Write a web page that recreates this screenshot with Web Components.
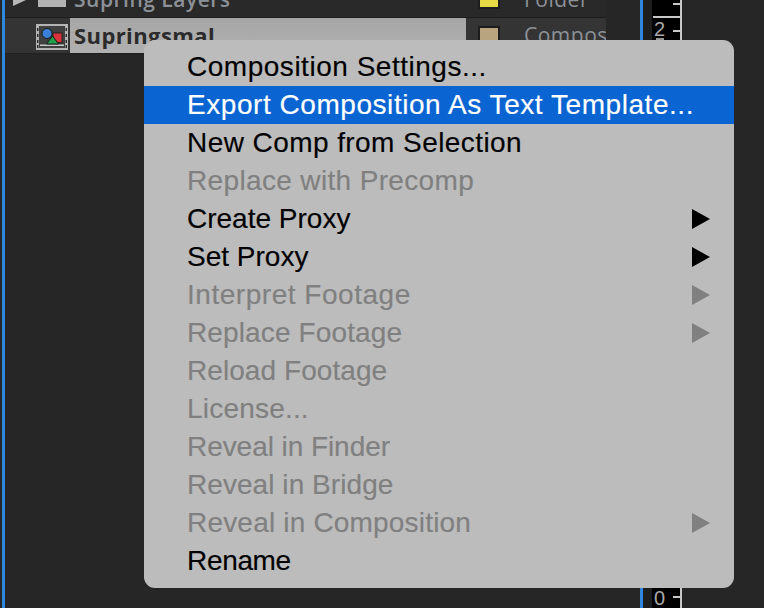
<!DOCTYPE html>
<html><head><meta charset="utf-8"><style>
html,body{margin:0;padding:0;background:#262626;}
body{width:764px;height:608px;overflow:hidden;position:relative;}
</style></head><body>
<ae-stage>
  <ae-panel slot="panel"></ae-panel>
  <ae-ruler slot="ruler"></ae-ruler>
  <ae-menu slot="menu">
    <ae-item style="--ls:.52px">Composition Settings...</ae-item>
    <ae-item active style="--ls:.55px">Export Composition As Text Template...</ae-item>
    <ae-item style="--ls:.43px">New Comp from Selection</ae-item>
    <ae-item disabled style="--ls:.35px">Replace with Precomp</ae-item>
    <ae-item submenu>Create Proxy</ae-item>
    <ae-item submenu>Set Proxy</ae-item>
    <ae-item disabled submenu style="--ls:.53px">Interpret Footage</ae-item>
    <ae-item disabled submenu style="--ls:.13px">Replace Footage</ae-item>
    <ae-item disabled style="--ls:.07px">Reload Footage</ae-item>
    <ae-item disabled style="--ls:.2px">License...</ae-item>
    <ae-item disabled style="--ls:-.06px">Reveal in Finder</ae-item>
    <ae-item disabled style="--ls:.06px">Reveal in Bridge</ae-item>
    <ae-item disabled submenu style="--ls:.19px">Reveal in Composition</ae-item>
    <ae-item style="--ls:-.33px">Rename</ae-item>
  </ae-menu>
</ae-stage>
<script>
function def(name,html){
  customElements.define(name,class extends HTMLElement{
    constructor(){super();this.attachShadow({mode:'open'}).innerHTML=html;}
  });
}
def('ae-stage',`<style>
:host{display:block;position:relative;width:764px;height:608px;overflow:hidden;background:#262626}
.wrap{display:flex;height:608px}
.gutter{width:2px;flex:none}
.line{width:3px;background:#2f86dc;flex:none}
.mid{width:635px;flex:none;display:flex}
.line2{width:3px;background:#2f86dc;flex:none}
.gap{width:9px;flex:none;background:#1e1e1e}
.menu{position:absolute;left:144px;top:40px}
</style>
<div class="wrap">
  <div class="gutter"></div><div class="line"></div>
  <div class="mid"><slot name="panel"></slot></div>
  <div class="line2"></div><div class="gap"></div>
  <slot name="ruler"></slot>
</div>
<div class="menu"><slot name="menu"></slot></div>`);
def('ae-panel',`<style>
:host{display:block;width:601px;font-family:"Open Sans","Noto Sans",sans-serif;font-size:21px}
.row{display:flex;align-items:center;position:relative;overflow:hidden}
.r1{height:17px;background:#292929;border-bottom:1px solid #1c1c1c}
.r2{height:35px;background:#343434;border-bottom:1px solid #1f1f1f}
.tw{width:0;height:0;border-left:13px solid #b8b8b8;border-top:6px solid transparent;border-bottom:6px solid transparent;position:absolute;left:8px;top:-6px}
.folder{position:absolute;left:33px;top:-14px;width:28px;height:21px;background:#b2b2b2}
.name{position:absolute;left:69px;top:-14px;color:#8c9197;font-weight:600;letter-spacing:.5px;line-height:27px;white-space:nowrap}
.sw{position:absolute;left:475px;top:-11px;width:18px;height:18px;background:#e6da46;outline:2px solid #1d1d1d}
.type{position:absolute;left:519px;top:-14px;color:#8c9197;line-height:27px;letter-spacing:.5px}
.ic{position:absolute;left:31px;top:6px}
.sel{position:absolute;left:65px;top:0;width:396px;height:35px;background:linear-gradient(180deg,#a6a6a6,#b0b0b0);box-sizing:border-box;padding-left:4px;color:#2b2b2b;font-weight:700;font-size:22px;line-height:35px;letter-spacing:.4px}
.sw2{position:absolute;left:475px;top:10px;width:18px;height:18px;background:#b8a47e;outline:2px solid #1d1d1d}
.type2{position:absolute;left:519px;top:4px;color:#8c9197;line-height:27px;letter-spacing:.5px}
</style>
<div class="row r1"><span class="tw"></span><span class="folder"></span><span class="name">Supring Layers</span><span class="sw"></span><span class="type">Folder</span></div>
<div class="row r2">
<svg class="ic" width="32" height="26" viewBox="0 0 32 26">
<rect width="32" height="26" fill="#b4b4b4"/>
<rect x="3" y="2" width="26" height="22" fill="#404040"/>
<path d="M4 20.5h24v1.5H4z" fill="#c8c8c8"/>
<path d="M1 4h1.5v3H1zM1 10h1.5v3H1zM1 16h1.5v3H1zM1 21h1.5v3H1zM29.5 4H31v3h-1.5zM29.5 10H31v3h-1.5zM29.5 16H31v3h-1.5zM29.5 21H31v3h-1.5z" fill="#2a2a2a"/>
<rect x="17" y="9" width="9" height="9.5" fill="#d8333a" stroke="#1a1a1a" stroke-width=".8"/>
<circle cx="11" cy="9.5" r="5" fill="#3a7fd8" stroke="#1a1a1a" stroke-width="1"/>
<path d="M16.5 12l6 8H10.500z" fill="#1fa34a" stroke="#1a1a1a" stroke-width="1"/>
</svg>
<div class="sel">Supringsmal</div><span class="sw2"></span><span class="type2">Compos</span></div>`);
def('ae-ruler',`<style>
:host{display:block;width:30px;height:608px;background:#000;border-right:2px solid #c8c8c8;box-sizing:border-box;position:relative;color:#a8a8a8;font:20px "Liberation Sans",sans-serif}
i{position:absolute;right:0;height:2px;background:#c8c8c8}
span{position:absolute;left:2px;line-height:22px}
b{position:absolute;left:4px;top:38px;width:8px;height:3px;background:#999}
</style>
<i style="top:3px;width:7px"></i><i style="top:16px;width:27px"></i><i style="top:30px;width:7px"></i><span style="top:18px">2</span><b></b>
<i style="top:596px;width:7px"></i><span style="top:587px">0</span>`);
def('ae-menu',`<style>
:host{display:block;width:590px;height:548px;box-sizing:border-box;padding:8px 0;background:#bcbcbc;border-radius:11px;font-family:"Liberation Sans",Arial,sans-serif;font-size:28px}
</style><slot></slot>`);
customElements.define('ae-item',class extends HTMLElement{
  constructor(){super();this.attachShadow({mode:'open'}).innerHTML=`<style>
  :host{display:flex;align-items:center;justify-content:space-between;height:38px;padding:0 24px 0 43px;color:#000;white-space:nowrap;letter-spacing:var(--ls,0);-webkit-text-stroke:.15px currentColor}
  :host([disabled]){color:#808080}
  :host([active]){background:#0a64d2;color:#fff}
  .arrow{display:none;width:0;height:0;border-left:18px solid currentColor;border-top:10px solid transparent;border-bottom:10px solid transparent}
  :host([submenu]) .arrow{display:block}
  </style><span><slot></slot></span><span class="arrow"></span>`;}
});
</script></body></html>
